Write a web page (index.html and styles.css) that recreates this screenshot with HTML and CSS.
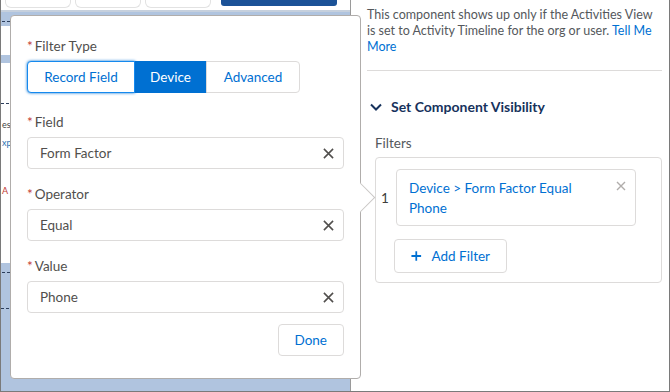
FILE: index.html
```html
<!DOCTYPE html>
<html>
<head>
  <title>Component Visibility</title>
  <link rel="stylesheet" href="styles.css">
</head>
<body>
  <div class="frame">
    <div class="canvas">
      <div class="topbar">
        <span class="tab"></span>
        <span class="tab"></span>
        <span class="tab"></span>
        <span class="save-btn"></span>
      </div>
      <div class="band"><span class="dash"></span></div>
      <div class="sheet sheet-short"></div>
      <div class="sheet sheet-tall">
        <span class="rule dark"></span>
        <span class="rule blue"></span>
        <span class="snip">es</span>
        <span class="snip link">xp</span>
        <span class="snip warn">A</span>
        <span class="rule blue low"></span>
        <span class="rule dark"></span>
      </div>
      <div class="band"><span class="dash"></span></div>

      <div class="popover">
        <div class="field first">
          <label class="label"><abbr>*</abbr>Filter Type</label>
          <div class="btn-group">
            <button class="seg focused">Record Field</button>
            <button class="seg active">Device</button>
            <button class="seg">Advanced</button>
          </div>
        </div>

        <div class="field">
          <label class="label"><abbr>*</abbr>Field</label>
          <div class="input">
            <span>Form Factor</span>
            <svg class="clear" viewBox="0 0 12 12"><path d="M1 1L11 11M11 1L1 11"/></svg>
          </div>
        </div>

        <div class="field">
          <label class="label"><abbr>*</abbr>Operator</label>
          <div class="input">
            <span>Equal</span>
            <svg class="clear" viewBox="0 0 12 12"><path d="M1 1L11 11M11 1L1 11"/></svg>
          </div>
        </div>

        <div class="field">
          <label class="label"><abbr>*</abbr>Value</label>
          <div class="input">
            <span>Phone</span>
            <svg class="clear" viewBox="0 0 12 12"><path d="M1 1L11 11M11 1L1 11"/></svg>
          </div>
        </div>

        <div class="actions">
          <button class="btn">Done</button>
        </div>
      </div>
    </div>

    <div class="panel">
      <p class="help">This component shows up only if the Activities View<br>is set to Activity Timeline for the org or user. <a href="#">Tell Me<br>More</a></p>
      <hr>
      <h3 class="section">
        <svg class="chevron" viewBox="0 0 12 8"><path d="M1 1.5L6 6.5L11 1.5"/></svg>
        Set Component Visibility
      </h3>
      <div class="filters-label">Filters</div>
      <div class="filters">
        <span class="num">1</span>
        <div class="filter-card">
          <a href="#">Device &gt; Form Factor Equal Phone</a>
          <svg class="card-x" viewBox="0 0 10 10"><path d="M1 1L9 9M9 1L1 9"/></svg>
        </div>
        <span></span>
        <button class="btn add">
          <svg class="plus" viewBox="0 0 12 12"><path d="M6 0.5V11.5M0.5 6H11.5"/></svg>
          Add Filter
        </button>
      </div>
    </div>
  </div>
</body>
</html>
```

FILE: styles.css
```css
* {
  box-sizing: border-box;
}
body {
  margin: 0;
  font-family: Lato, "Open Sans", Arial, sans-serif;
  font-size: 13.5px;
  color: #3e3e3c;
}
.frame {
  width: 670px;
  height: 392px;
  display: flex;
  border: 1px solid #7a7a7a;
  border-top: none;
  overflow: hidden;
}
.canvas {
  position: relative;
  width: 349px;
  background-color: #b0c4df;
  flex-shrink: 0;
}
.topbar {
  height: 12px;
  background: #fff;
  display: flex;
  align-items: flex-start;
  padding-left: 4px;
  border-bottom: 2px solid #c6d0dd;
}
.tab {
  width: 66px;
  height: 8px;
  margin-right: 4px;
  border: 1px solid #e2e2e2;
  border-top: none;
  border-radius: 0 0 6px 6px;
}
.save-btn {
  width: 116px;
  height: 6px;
  margin-left: 6px;
  background: #1b5297;
  border-radius: 0 0 3px 3px;
}
.band {
  height: 14px;
  position: relative;
}
.dash {
  display: block;
  position: absolute;
  left: 1px;
  right: 0;
  top: 9px;
  border-top: 1px dashed #2c3e5c;
}
.sheet {
  background: #fff;
  margin-right: 9px;
}
.sheet-short {
  height: 29px;
  margin-bottom: 8px;
}
.sheet-tall {
  height: 200px;
  padding-top: 40px;
  display: flex;
  flex-direction: column;
  gap: 8px;
}
.rule {
  display: block;
  height: 1px;
  width: 100%;
}
.rule.dark {
  border-top: 1px dashed #2c3e5c;
}
.rule.blue {
  background: #2a6fb0;
}
.rule.low {
  margin-top: 96px;
}
.snip {
  font-size: 9px;
  line-height: 10px;
  margin-left: 1px;
  color: #444;
}
.snip.link {
  color: #2a6fb0;
}
.snip.warn {
  color: #c23934;
  margin-top: 30px;
}

/* popover */
.popover {
  position: absolute;
  left: 9px;
  top: 15px;
  width: 351px;
  height: 364px;
  background: #fff;
  border: 1px solid #b0adab;
  border-radius: 4px;
  padding: 21px 16px 0 16px;
  z-index: 2;
}
.popover::after {
  content: "";
  position: absolute;
  right: -11px;
  top: 171px;
  width: 20px;
  height: 20px;
  background: #fff;
  border-top: 1px solid #c9c7c5;
  border-right: 1px solid #c9c7c5;
  transform: rotate(45deg);
}
.field {
  margin-top: 16px;
}
.field.first {
  margin-top: 0;
  margin-bottom: 20px;
}
.field.first + .field {
  margin-top: 0;
}
.label {
  display: block;
  line-height: 18px;
  margin-bottom: 6px;
  color: #514f4d;
}
.label abbr {
  color: #c23934;
  margin-right: 2px;
  text-decoration: none;
}
.btn-group {
  display: flex;
}
.seg {
  height: 32px;
  font: inherit;
  white-space: nowrap;
  color: #0070d2;
  background: #fff;
  border: 1px solid #dddbda;
  margin-left: -1px;
  padding: 0;
}
.seg:first-child {
  margin-left: 0;
  border-radius: 4px 0 0 4px;
  width: 108px;
}
.seg:nth-child(2) {
  width: 73px;
}
.seg:last-child {
  border-radius: 0 4px 4px 0;
  width: 94px;
}
.seg.focused {
  border-color: #1589ee;
  box-shadow: 0 0 3px #0070d2;
  position: relative;
  z-index: 1;
}
.seg.active {
  background: #0070d2;
  border-color: #0070d2;
  color: #fff;
}
.input {
  height: 32px;
  border: 1px solid #dddbda;
  border-radius: 4px;
  padding: 0 9px 0 12px;
  display: flex;
  align-items: center;
  justify-content: space-between;
  color: #514f4d;
}
.clear {
  width: 11px;
  height: 11px;
  fill: none;
  stroke: #514f4d;
  stroke-width: 1.7;
}
.actions {
  display: flex;
  justify-content: flex-end;
  margin-top: 11px;
}
.btn {
  height: 32px;
  font: inherit;
  white-space: nowrap;
  color: #0070d2;
  background: #fff;
  border: 1px solid #dddbda;
  border-radius: 4px;
  padding: 0 16px;
}

/* right panel */
.panel {
  flex: 1;
  min-width: 0;
  overflow: hidden;
  background: #fff;
  border-left: 1px solid #9a9a9a;
  padding: 7px 6px 0 16px;
}
.help {
  margin: 0;
  font-size: 12.5px;
  line-height: 16px;
  white-space: nowrap;
  color: #54585c;
}
.help a,
.filter-card a {
  color: #0070d2;
  text-decoration: none;
}
hr {
  border: none;
  border-top: 1px solid #dddbda;
  margin: 15px 1px 0 0;
}
.section {
  margin: 26px 0 0 0;
  font-size: 14px;
  line-height: 20px;
  font-weight: bold;
  color: #16325c;
  display: flex;
  align-items: center;
  gap: 9px;
}
.chevron {
  width: 12px;
  height: 8px;
  margin-left: 3px;
  fill: none;
  stroke: #16325c;
  stroke-width: 2;
}
.filters-label {
  margin: 17px 0 0 8px;
  line-height: 18px;
  color: #54585c;
}
.filters {
  margin: 5px 1px 0 8px;
  border: 1px solid #dddbda;
  border-radius: 4px;
  display: grid;
  grid-template-columns: 20px 240px;
  align-items: center;
  row-gap: 13px;
  padding: 11px 0 9px 0;
}
.num {
  color: #3e3e3c;
  padding-left: 5px;
}
.filter-card {
  position: relative;
  height: 57px;
  border: 1px solid #dddbda;
  border-radius: 4px;
  padding: 8px 28px 0 12px;
  line-height: 20px;
}
.card-x {
  position: absolute;
  right: 9px;
  top: 11px;
  width: 10px;
  height: 10px;
  fill: none;
  stroke: #b0adab;
  stroke-width: 1.4;
}
.add {
  justify-self: start;
  margin-left: -2px;
  height: 34px;
  width: 113px;
  display: flex;
  align-items: center;
  gap: 10px;
  padding: 0 16px;
}
.plus {
  width: 12px;
  height: 12px;
  fill: none;
  stroke: #0070d2;
  stroke-width: 2;
}
```
